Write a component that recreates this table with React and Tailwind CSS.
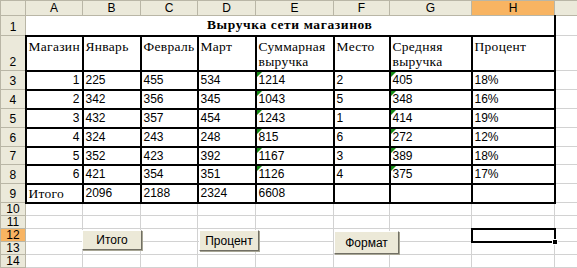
import React from "react";

const cols = [25, 57, 58, 57, 58, 78, 56, 82, 83, 23];
const letters = ["A", "B", "C", "D", "E", "F", "G", "H"];
const heads = ["Магазин", "Январь", "Февраль", "Март", "Суммарная выручка", "Место", "Средняя выручка", "Процент"];
const data = [
  ["1", "225", "455", "534", "1214", "2", "405", "18%"],
  ["2", "342", "356", "345", "1043", "5", "348", "16%"],
  ["3", "432", "357", "454", "1243", "1", "414", "19%"],
  ["4", "324", "243", "248", "815", "6", "272", "12%"],
  ["5", "352", "423", "392", "1167", "3", "389", "18%"],
  ["6", "421", "354", "351", "1126", "4", "375", "17%"],
];
const rowH = [19, 19, 19, 19, 18, 19, 19];

const serif = "font-['Liberation_Serif','Times_New_Roman',serif]";
const sans = "font-['Liberation_Sans',Arial,sans-serif]";
const hdr = "bg-[#ebe9da] border border-[#b9b6a6] text-[12px] text-black font-normal p-0 " + sans;
const thin = "border border-[#d2d2d2] p-0 leading-[10px] text-[10px]";
const thick = "border-2 border-black p-0";

function Tri() {
  return <span className="absolute left-0 top-0 w-0 h-0 border-t-[5px] border-t-[#168a16] border-r-[5px] border-r-transparent" />;
}

function Btn({ className, children }) {
  return (
    <div className={"absolute flex items-center justify-center bg-[#ece9d8] border border-t-white border-l-white border-r-[#716f64] border-b-[#716f64] shadow-[1px_1px_0_#a7a594] text-[12px] text-black " + sans + " " + className}>
      {children}
    </div>
  );
}

export default function App() {
  return (
    <div className="relative w-[577px] h-[268px] overflow-hidden bg-white">
      <table className="border-collapse table-fixed w-[577px]">
        <colgroup>
          {cols.map((w, i) => (
            <col key={i} style={{ width: w }} />
          ))}
        </colgroup>
        <tbody>
          <tr className="h-[15px]">
            <th className={hdr}></th>
            {letters.map((l) => (
              <th key={l} className={hdr + (l === "H" ? " !bg-[#f8b462]" : "") + " text-center leading-[13px]"}>
                {l}
              </th>
            ))}
            <th className={hdr}></th>
          </tr>
          <tr className="h-[20px]">
            <th className={hdr + " text-center align-bottom leading-[16px]"}>1</th>
            <td colSpan={8} className={thin + " border-r-2 border-r-black border-b-2 border-b-black text-center align-middle !leading-[16px]"}>
              <span className={serif + " font-bold text-[13.5px] leading-[16px] tracking-[0.6px] text-black"}>Выручка сети магазинов</span>
            </td>
            <td className={thin}></td>
          </tr>
          <tr className="h-[35px]">
            <th className={hdr + " text-center align-bottom leading-[16px]"}>2</th>
            {heads.map((h, i) => (
              <td key={i} className={thick + " align-top pl-[2px] pt-[2px] text-[13.5px] leading-[15px] tracking-[0.3px] text-black " + serif}>
                {h.split(" ").map((w, j) => (
                  <div key={j}>{w}</div>
                ))}
              </td>
            ))}
            <td className={thin}></td>
          </tr>
          {data.map((r, ri) => (
            <tr key={ri} style={{ height: rowH[ri] }}>
              <th className={hdr + " text-center align-bottom leading-[16px]"}>{ri + 3}</th>
              {r.map((v, ci) => (
                <td
                  key={ci}
                  className={
                    thick +
                    " relative align-middle text-[12px] leading-[14px] text-black " +
                    sans +
                    (ci === 0 ? " text-right pr-[2px]" : " text-left pl-[2px]")
                  }
                >
                  {(ci === 4 || ci === 6) && <Tri />}
                  {v}
                </td>
              ))}
              <td className={thin}></td>
            </tr>
          ))}
          <tr className="h-[19px]">
            <th className={hdr + " text-center align-bottom leading-[16px]"}>9</th>
            <td className={thick + " pl-[2px] text-[13.5px] tracking-[0.3px] leading-[15px] text-black " + serif}>Итого</td>
            {["2096", "2188", "2324", "6608", "", "", ""].map((v, i) => (
              <td key={i} className={thick + " pl-[2px] text-[12px] leading-[14px] text-black " + sans}>
                {v}
              </td>
            ))}
            <td className={thin}></td>
          </tr>
          {[10, 11, 12, 13, 14].map((n) => (
            <tr key={n} className="h-[13px]">
              <th className={hdr + (n === 12 ? " !bg-[#f8b462]" : "") + " text-center align-bottom leading-[12px]"}>{n}</th>
              {letters.map((l) =>
                n === 12 && l === "H" ? (
                  <td key={l} className={thick + " relative"}>
                    <span className="absolute z-10 right-[-4px] bottom-[-4px] w-[6px] h-[6px] bg-black border border-white" />
                  </td>
                ) : (
                  <td key={l} className={thin}></td>
                )
              )}
              <td className={thin}></td>
            </tr>
          ))}
        </tbody>
      </table>
      <Btn className="left-[82px] top-[230px] w-[60px] h-[20px]">Итого</Btn>
      <Btn className="left-[199px] top-[230px] w-[60px] h-[21px]">Процент</Btn>
      <Btn className="left-[334px] top-[231px] w-[65px] h-[23px]">Формат</Btn>
    </div>
  );
}
